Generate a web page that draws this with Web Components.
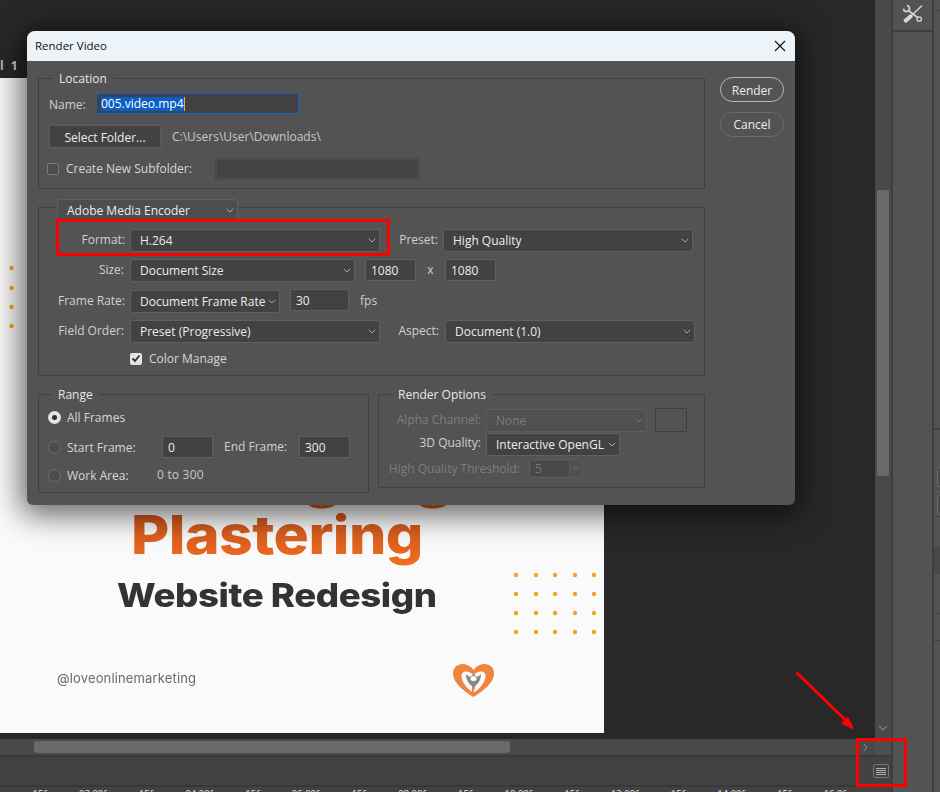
<!DOCTYPE html>
<html lang="en"><head><meta charset="utf-8"><title>Render Video</title>
<style>
html,body{margin:0;padding:0;width:940px;height:792px;overflow:hidden;background:#282828}
</style></head><body>
<ps-app>
  <ps-artboard slot="canvas"></ps-artboard>
  <ps-dialog slot="canvas" heading="Render Video">
    <div slot="main">
      <ps-group style="height:111px;padding:14px 0 0 0">
        <span slot="legend" style="--l:14px">Location</span>
        <ps-row style="height:21px">
          <ps-label style="width:47px;height:21px;margin-left:10px;text-align:left;line-height:23px">Name:</ps-label>
          <ps-field style="width:203px;height:21px;border-color:#0b66c8;padding-top:1px"><ps-sel>005.video.mp4</ps-sel></ps-field>
        </ps-row>
        <ps-row style="margin-top:10px;margin-left:9px">
          <ps-button kind="square" style="width:114px;height:25px;padding-top:1px">Select Folder...</ps-button>
          <ps-label style="margin-left:10px;height:25px;line-height:26px;color:#c8c8c8">C:\Users\User\Downloads\</ps-label>
        </ps-row>
        <ps-row style="margin-top:9px;margin-left:8px">
          <ps-check style="width:168px;height:21px">Create New Subfolder:</ps-check>
          <ps-field disabled style="width:204px;height:22px"></ps-field>
        </ps-row>
      </ps-group>
      <ps-group style="height:169px;margin-top:18px;padding-top:21px">
        <ps-select slot="legend" style="--l:18px;--t:-9px;width:181px;height:23px;background:#4d4d4d">Adobe Media Encoder</ps-select>
        <ps-row>
          <ps-label style="width:86px">Format:</ps-label>
          <ps-select style="width:250px;margin-left:5px">H.264</ps-select>
          <ps-label style="width:58px;">Preset:</ps-label>
          <ps-select style="width:250px;margin-left:5px">High Quality</ps-select>
        </ps-row>
        <ps-row style="margin-top:7px">
          <ps-label style="width:85px">Size:</ps-label>
          <ps-select style="width:225px;margin-left:6px">Document Size</ps-select>
          <ps-field style="width:51px;height:22px;margin-left:10px">1080</ps-field>
          <ps-label style="width:29px;text-align:center">x</ps-label>
          <ps-field style="width:51px;height:22px">1080</ps-field>
        </ps-row>
        <ps-row style="margin-top:8px">
          <ps-label style="width:86px">Frame Rate:</ps-label>
          <ps-select style="width:150px;margin-left:5px">Document Frame Rate</ps-select>
          <ps-field style="width:59px;height:22px;margin-left:10px;margin-top:-1px">30</ps-field>
          <ps-label style="margin-left:11px">fps</ps-label>
        </ps-row>
        <ps-row style="margin-top:7px">
          <ps-label style="width:85px">Field Order:</ps-label>
          <ps-select style="width:250px;margin-left:6px">Preset (Progressive)</ps-select>
          <ps-label style="width:59px">Aspect:</ps-label>
          <ps-select style="width:250px;margin-left:6px">Document (1.0)</ps-select>
        </ps-row>
        <ps-row style="margin-top:9px;margin-left:91px">
          <ps-check checked style="height:13px">Color Manage</ps-check>
        </ps-row>
      </ps-group>
      <div style="display:flex;margin-top:18px;align-items:flex-start;width:667px">
        <ps-group style="width:331px;height:99px;padding-top:13px">
          <span slot="legend" style="--l:13px">Range</span>
          <ps-row style="margin-left:9px;height:20px"><ps-radio checked style="height:18px">All Frames</ps-radio></ps-row>
          <ps-row style="margin-left:9px;margin-top:8px">
            <ps-radio style="width:114px;height:22px">Start Frame:</ps-radio>
            <ps-field style="width:51px;height:22px">0</ps-field>
            <ps-label style="width:75px;margin-left:11px;text-align:left;line-height:22px">End Frame:</ps-label>
            <ps-field style="width:51px;height:22px">300</ps-field>
          </ps-row>
          <ps-row style="margin-left:9px;margin-top:7px;height:20px">
            <ps-radio style="width:109px;height:20px">Work Area:</ps-radio>
            <ps-label style="height:20px;line-height:20px;color:#c8c8c8;letter-spacing:.2px">0 to 300</ps-label>
          </ps-row>
        </ps-group>
        <ps-group style="width:327px;height:94px;margin-left:9px;padding-top:14px">
          <span slot="legend" style="--l:13px">Render Options</span>
          <ps-row>
            <ps-label disabled style="width:102px">Alpha Channel:</ps-label>
            <ps-select disabled style="width:161px;margin-left:5px">None</ps-select>
            <div style="width:32px;height:24px;margin:-1px 0 0 8px;box-sizing:border-box;border:1px solid #3f3f3f"></div>
          </ps-row>
          <ps-row style="margin-top:1px">
            <ps-label style="width:102px;line-height:20px">3D Quality:</ps-label>
            <ps-select style="width:134px;margin-left:5px">Interactive OpenGL</ps-select>
          </ps-row>
          <ps-row style="margin-top:2px">
            <ps-label disabled style="width:141px;height:20px;line-height:22px">High Quality Threshold:</ps-label>
            <ps-spin style="margin-left:9px">5</ps-spin>
          </ps-row>
        </ps-group>
      </div>
    </div>
    <ps-button slot="actions" kind="primary" style="width:64px;height:25px;padding-top:1px">Render</ps-button>
    <ps-button slot="actions" kind="pill" style="width:64px;height:25px;margin-top:10px">Cancel</ps-button>
  </ps-dialog>
  <ps-marks slot="marks"></ps-marks>
</ps-app>
<script>
const FONT='"Open Sans","Noto Sans",sans-serif';
function def(name,html,init){
  customElements.define(name,class extends HTMLElement{
    constructor(){super();const r=this.attachShadow({mode:'open'});r.innerHTML=typeof html==='function'?html(this):html;if(init)init(this,r);}
  });
}
const chev='<svg width="8" height="5" viewBox="0 0 8 5" fill="none"><path d="M.7.8 4 4l3.3-3.2" stroke="currentColor" stroke-width="1"/></svg>';

def('ps-app',`<style>
:host{display:grid;grid-template-columns:891px 2px 39px 2px 6px;width:940px;height:792px;background:#282828;position:relative;overflow:hidden;font:12px ${FONT};color:#d0d0d0}
.left{display:grid;grid-template-rows:739px 16px 2px 28px 2px 5px;grid-template-columns:875px 16px;min-width:0}
.canvas{position:relative;background:#282828;overflow:hidden;padding-top:78px;box-sizing:border-box}
.vs{background:#494949;position:relative;display:flex;flex-direction:column;align-items:center}
.vthumb{width:12px;height:286px;margin-top:190px;background:#696969;border-radius:1px}
.vchev{margin-top:auto;margin-bottom:8px;color:#7d7d7d;display:flex}
.hs{background:#494949;display:flex;align-items:center;padding-left:34px;box-sizing:border-box}
.hthumb{width:476px;height:12px;background:#696969;border-radius:2px}
.hchev{margin-left:auto;margin-right:7px;color:#7d7d7d;display:flex}
.corner{background:#4f4f4f}
.line{grid-column:1/3;background:#3a3a3a}
.opts{grid-column:1/3;background:#424242;display:flex;align-items:center;justify-content:flex-end;padding-right:2px}
.menu{width:16px;height:14px;box-sizing:border-box;border:1px solid #787878;border-radius:2px;display:flex;flex-direction:column;justify-content:center;gap:1px;padding:0 2px}
.menu i{display:block;height:1px;background:#b4b4b4}
.sep{background:#3e3e3e}
.panel{background:#535353;display:flex;flex-direction:column}
.cell{height:30px;display:flex;align-items:flex-start;justify-content:center;padding-top:5px;box-sizing:border-box}
.bar{height:2px;background:#3e3e3e}
.far{background:#535353;display:flex;flex-direction:column;overflow:hidden}
.far .hl{height:1px;background:#424242;flex:none}
.far .btn{width:10px;height:20px;margin-left:3px;border:1px solid #6a6a6a;border-radius:3px;box-sizing:border-box;background:#4c4c4c;flex:none}
</style>
<div class="left">
  <div class="canvas"><slot name="canvas"></slot></div>
  <div class="vs"><div class="vthumb"></div><div class="vchev">${chev.replace('width="8"','width="10"').replace('height="5"','height="6"')}</div></div>
  <div class="hs"><div class="hthumb"></div><div class="hchev"><svg width="5" height="9" viewBox="0 0 5 9" fill="none"><path d="M.8.8 4 4.5.8 8.2" stroke="currentColor" stroke-width="1.2"/></svg></div></div>
  <div class="corner"></div>
  <div class="line"></div>
  <div class="opts"><div class="menu"><i></i><i></i><i></i><i></i></div></div>
  <div class="line" style="background:#383838"></div>
  <ps-ruler style="grid-column:1/3"></ps-ruler>
</div>
<div class="sep"></div>
<div class="panel">
  <div class="cell"><svg width="20" height="18" viewBox="0 0 20 18" fill="none" stroke="#d6d6d6" stroke-linecap="round">
    <path d="M4.500.7A3 3 0 1 1 .7 4.500" stroke-width="1.800"/><path d="M5.600 5.600 14.500 12.500" stroke-width="1.600"/>
    <circle cx="16.200" cy="14" r="2.200" stroke-width="1.300"/>
    <path d="M18.500 1 8.500 10.500" stroke-width="1.500"/><path d="M7.500 11.500 2.800 15.500" stroke-width="4.200"/></svg></div>
  <div class="bar"></div>
</div>
<div class="sep"></div>
<div class="far">
  <div style="height:10px;flex:none"></div><div class="hl"></div>
  <div style="height:417px;flex:none"></div><div class="hl" style="height:2px"></div>
  <div style="height:37px;flex:none"></div><div class="btn"></div>
  <div style="height:2px;flex:none"></div><div class="hl"></div>
  <div style="height:5px;flex:none"></div><div class="btn"></div>
  <div style="height:1px;flex:none"></div><div class="hl"></div>
  <div style="height:30px;flex:none"></div><div style="height:27px;background:#484848;flex:none"></div>
  <div style="height:39px;flex:none"></div><div class="hl"></div>
  <div style="height:26px;flex:none"></div><div class="hl"></div>
</div>
<slot name="marks"></slot>`);

def('ps-ruler',()=>{
  let s='';
  for(let i=0;i<16;i++){s+=`<span>${i%2?String(i+1).padStart(2,'0')+':00f':'15f'}</span>`;}
  return `<style>
:host{display:block;height:5px;overflow:hidden;background:#424242;position:relative}
.t{display:flex;width:847px;box-sizing:border-box;padding-left:13px;height:5px;border-right:1px solid #555;overflow:hidden}
span{flex:none;width:53.2px;text-align:center;font:9.5px/12px ${FONT};color:#e2e2e2;margin-top:1px}
</style><div class="t">${s}</div>`;
});

def('ps-artboard',()=>{
  let d='';
  for(const x of [516,536,555,575,594])for(const y of [575,594,613,632])d+=`<circle cx="${x}" cy="${y-78}" r="2.200"/>`;
  for(const y of [268,288,307,326])d+=`<circle cx="11.500" cy="${y-78}" r="2.200"/>`;
  return `<style>
:host{display:block;width:604px;height:655px;background:#fafafa;position:relative;overflow:hidden;font-family:Inter,sans-serif}
svg{position:absolute;left:0;top:0}
.col{position:absolute;left:0;top:425px;width:604px;height:230px;filter:blur(.45px)}
.p{position:absolute;left:131px;top:-1px;font-size:54px;line-height:66px;font-weight:800;letter-spacing:-.5px;white-space:nowrap;transform:scaleX(1.09);transform-origin:0 0;background:linear-gradient(180deg,#c0501c 0%,#f56d20 100%);-webkit-background-clip:text;background-clip:text;color:transparent}
.w{position:absolute;left:117px;top:72px;font-size:33px;line-height:40px;font-weight:800;letter-spacing:-.4px;color:#333;white-space:nowrap;transform:scaleX(1.11);transform-origin:0 0}
.h{position:absolute;left:57px;top:167px;font-size:13px;line-height:16px;color:#6b6b6b;letter-spacing:.15px;white-space:nowrap}
</style>
<svg width="604" height="655" viewBox="0 0 604 655"><g fill="#f9a11b">${d}</g>
<path d="M308 426c3 6 24 6 28 0l-3-1c-5 3-17 3-22 0z" fill="#d9581c"/><path d="M419 426c3 6 24 6 28 0l-3-1c-5 3-17 3-22 0z" fill="#d9581c"/>
<g transform="translate(453 586)">
<path d="M20.500 33C12 28 0 19 0 9.500 0 3.500 4.500 0 9.500 0c4.500 0 8.500 2.500 11 6 2.500-3.500 6.500-6 11-6C36.500 0 41 3.500 41 9.500 41 19 29 28 20.500 33z" fill="#f1853e"/>
<path d="M20.500 29c-6-4-12-11-12-17 0-3 2-4.500 4.500-4.500 3 0 5.500 1.500 7.500 4 2-2.500 4.500-4 7.500-4 2.500 0 4.500 1.500 4.500 4.500 0 6-6 13-12 17z" fill="#fafafa"/>
<path d="M20.500 26c-1 0-1.500-2-1.500-4-3-2-6-6-6-12 2 2 3 2 4 3l3.500-3 3.500 3c1-1 2-1 4-3 0 6-3 10-6 12 0 2-.5 4-1.500 4z" fill="#8a8a8a"/>
<path d="M20.500 12c-2 0-3.500 1.500-3 3.500 1.500 2 4.500 2 6 0 .5-2-1-3.500-3-3.500z" fill="#fff"/>
<path d="M20 31c-1-1-1.500-4-1-8l2 0c-.5 3 0 6 1 8l-1 1z" fill="#f1853e"/></g>
</svg>
<div class="col"><div class="p">Plastering</div><div class="w">Website Redesign</div><div class="h">@loveonlinemarketing</div></div>`;
});

def('ps-dialog',el=>`<style>
:host{position:absolute;left:27px;top:31px;width:768px;height:474px;background:#535353;border-radius:8px 8px 6px 6px;box-shadow:0 4px 30px 6px rgba(0,0,0,.6);font:12px ${FONT};color:#d0d0d0;display:flex;flex-direction:column;overflow:visible}
.title{height:30px;flex:none;box-sizing:border-box;background:#ecf4f9;border-radius:8px 8px 0 0;display:flex;align-items:center;padding:0 9px 2px 8px;color:#111;font:11.5px ${FONT}}
.x{margin-left:auto;display:flex;padding-top:1px}
.body{display:flex;padding:17px 0 0 11px;flex:1;min-height:0}
.main{width:667px;flex:none}
.act{display:flex;flex-direction:column;margin:-1px 0 0 15px}
</style>
<div class="title"><span>${el.getAttribute('heading')}</span><span class="x"><svg width="12" height="12" viewBox="0 0 12 12" fill="none" stroke="#111" stroke-width="1.100"><path d="M1 1l10 10M11 1 1 11"/></svg></span></div>
<div class="body"><div class="main"><slot name="main"></slot></div><div class="act"><slot name="actions"></slot></div></div>`);

def('ps-group',`<style>
:host{display:block;box-sizing:border-box;border:1px solid #414141;position:relative}
slot[name=legend]::slotted(*){position:absolute;left:var(--l,14px);top:var(--t,-8px)}
slot[name=legend]::slotted(span){background:#535353;padding:0 6px;line-height:16px;color:#e6e6e6}
</style><slot name="legend"></slot><slot></slot>`);

def('ps-row',`<style>:host{display:flex;align-items:flex-start}</style><slot></slot>`);

def('ps-label',el=>`<style>
:host{display:block;flex:none;text-align:right;line-height:21px;white-space:nowrap;color:${el.hasAttribute('disabled')?'#7d7d7d':'#d0d0d0'}}
</style><slot></slot>`);

def('ps-sel',`<style>:host{display:inline-block;background:#0a5fc4;color:#fff;line-height:14px;border-right:1px solid #e2a760;margin-left:-1px}</style><slot></slot>`);

def('ps-field',el=>`<style>
:host{display:flex;flex:none;align-items:center;box-sizing:border-box;background:${el.hasAttribute('disabled')?'#444':'#424242'};border:${el.hasAttribute('disabled')?'2px':'1px'} solid ${el.hasAttribute('disabled')?'#4e4e4e':'#5f5f5f'};padding-left:5px;color:#ececec;white-space:nowrap;outline:${el.hasAttribute('disabled')?'1px solid #474747':'0'};outline-offset:-1px}
</style><slot></slot>`);

def('ps-select',el=>{const d=el.hasAttribute('disabled');return `<style>
:host{display:flex;flex:none;align-items:center;box-sizing:border-box;height:23px;background:${d?'#505050':'#424242'};border:1px solid ${d?'#5e5e5e':'#606060'};border-radius:3px;padding:0 3px 0 9px;color:${d?'#7d7d7d':'#ececec'};white-space:nowrap}
.c{margin-left:auto;display:flex;color:${d?'#767676':'#a8a8a8'}}
</style><span><slot></slot></span><span class="c">${chev}</span>`});

def('ps-spin',`<style>
:host{display:flex;flex:none;box-sizing:border-box;width:54px;height:19px;margin-top:1px;border:1px solid #5c5c5c;border-radius:3px;color:#757575;background:#505050}
.v{width:38px;box-sizing:border-box;margin:1px 0 1px 1px;background:#484848;padding-left:4px;line-height:15px;border-right:0}
.b{flex:1;border-left:1px solid #5c5c5c;display:flex;align-items:center;justify-content:center;color:#6f6f6f}
</style><div class="v"><slot></slot></div><div class="b">${chev}</div>`);

def('ps-button',el=>{const k=el.getAttribute('kind');return `<style>
:host{display:flex;flex:none;align-items:center;justify-content:center;box-sizing:border-box;color:#ececec;white-space:nowrap;
${k==='square'?'background:#424242;border:2px solid #595959;border-radius:3px':k==='primary'?'border:1.500px solid #b6b6b6;border-radius:13px':'border:1.500px solid #6c6c6c;border-radius:13px'}}
</style><slot></slot>`});

def('ps-check',el=>{const c=el.hasAttribute('checked');return `<style>
:host{display:flex;flex:none;align-items:center;gap:7px;white-space:nowrap;color:#d6d6d6}
.b{width:12px;height:12px;flex:none;box-sizing:border-box;border-radius:2px;display:flex;align-items:center;justify-content:center;${c?'background:#e4e4e4':'border:1px solid #7a7a7a;background:#4c4c4c'}}
</style><span class="b">${c?'<svg width="10" height="9" viewBox="0 0 10 9" fill="none"><path d="M1.500 4.500 4 7l4.500-5.500" stroke="#2c2c2c" stroke-width="1.800"/></svg>':''}</span><span><slot></slot></span>`});

def('ps-radio',el=>{const c=el.hasAttribute('checked');return `<style>
:host{display:flex;flex:none;align-items:center;gap:6px;white-space:nowrap;color:#d6d6d6}
.r{width:13px;height:13px;flex:none;box-sizing:border-box;border-radius:50%;display:flex;align-items:center;justify-content:center;${c?'background:#e4e4e4':'border:1px solid #6e6e6e;background:#4c4c4c'}}
.r i{width:5px;height:5px;border-radius:50%;background:#303030;display:${c?'block':'none'}}
</style><span class="r"><i></i></span><span><slot></slot></span>`});

def('ps-marks',`<style>
:host{position:absolute;left:0;top:0;width:940px;height:792px;pointer-events:none}
.b{position:absolute;box-sizing:border-box;border:3px solid #f00}
svg{position:absolute;left:0;top:0}
.c{position:absolute;left:0;top:60px;font:700 12px/12px ${FONT};color:#b0b0b0;letter-spacing:2px}
</style>
<div class="c">l 1</div>
<div class="b" style="left:56px;top:219px;width:334px;height:37px"></div>
<div class="b" style="left:856px;top:738px;width:51px;height:49px"></div>
<svg width="940" height="792" viewBox="0 0 940 792"><path d="M796.500 672.500 848 722.500" stroke="#f00" stroke-width="3" fill="none"/><path d="M854.500 729.500 841 724 848 716.500z" fill="#f00"/></svg>`);
</script>
</body></html>
